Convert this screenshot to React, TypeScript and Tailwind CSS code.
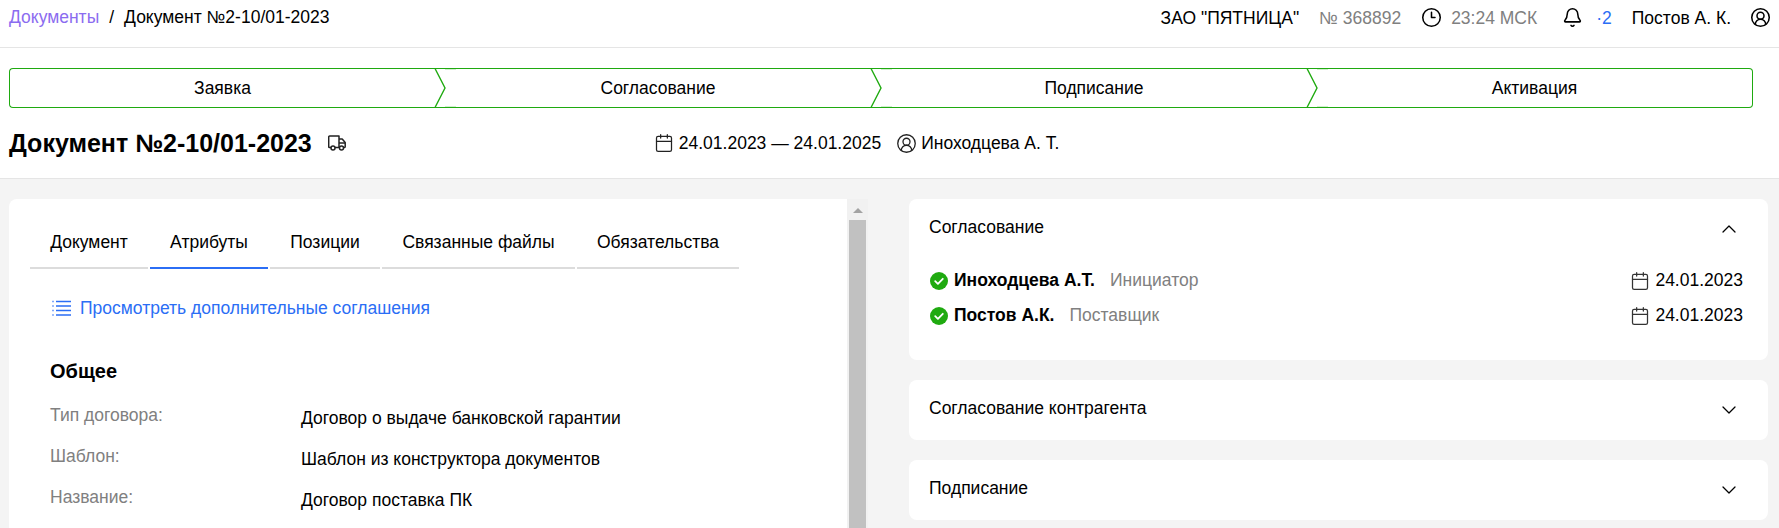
import React from "react";
import { Bell, Calendar, ChevronDown, ChevronUp, CircleUserRound, Clock3 } from "lucide-react";

const steps = ["Заявка", "Согласование", "Подписание", "Активация"];
const tabs: [string, string][] = [
  ["Документ", "w-[118px]"],
  ["Атрибуты", "w-[118px]"],
  ["Позиции", "w-[110px]"],
  ["Связанные файлы", "w-[193px]"],
  ["Обязательства", "w-[162px]"],
];
const rows = [
  ["Тип договора:", "Договор о выдаче банковской гарантии"],
  ["Шаблон:", "Шаблон из конструктора документов"],
  ["Название:", "Договор поставка ПК"],
];

function Check() {
  return (
    <svg width="18" height="18" viewBox="0 0 18 18" className="ml-[1px] shrink-0">
      <circle cx="9" cy="9" r="9" fill="#1faa10" />
      <path d="M5.2 9.2l2.7 2.6 4.9-5" fill="none" stroke="#fff" strokeWidth="1.8" strokeLinecap="round" strokeLinejoin="round" />
    </svg>
  );
}

function TruckIcon() {
  return (
    <svg width="18" height="16" viewBox="0 0 18 16" className="ml-[16px] shrink-0" fill="none" stroke="#222" strokeWidth="1.5" strokeLinejoin="round">
      <path d="M3 12.5H1.5a.8.8 0 0 1-.8-.8V2a1 1 0 0 1 1-1H11v11.5H7" />
      <path d="M11 4h3.2l3 3.6v4.2a.7.7 0 0 1-.7.7H15" />
      <path d="M11 8h6" />
      <path d="M11 12.5h.5" />
      <circle cx="5" cy="13" r="2" />
      <circle cx="13.5" cy="13" r="2" />
    </svg>
  );
}

function ListIcon() {
  return (
    <svg width="20" height="16" viewBox="0 0 20 16" className="shrink-0" fill="none" stroke="#2b6ef5">
      <path d="M5 1.5h15M5 6h15M5 10.500h15M5 15h15" strokeWidth="1.5" />
      <path d="M1 1.500h2M1 6h2M1 10.500h2M1 15h2" strokeWidth="1.5" opacity="0.6" />
    </svg>
  );
}

function Person({ name, role }: { name: string; role: string }) {
  return (
    <div className="flex h-[35px] items-center">
      <Check />
      <span className="ml-[6px] font-bold">{name}</span>
      <span className="ml-[15px] text-[#808080]">{role}</span>
      <span className="ml-auto flex items-center gap-[5px]">
        <Calendar size={20} strokeWidth={1.5} className="text-[#333]" />
        24.01.2023
      </span>
    </div>
  );
}

function Panel({ title, open }: { title: string; open?: boolean }) {
  return (
    <div className="rounded-lg bg-white px-[20px]">
      <div className="flex h-[60px] items-center justify-between pr-[7px]">
        <span className="pb-[3px]">{title}</span>
        {open ? <ChevronUp size={24} strokeWidth={1.25} /> : <ChevronDown size={24} strokeWidth={1.25} />}
      </div>
      {open && (
        <div className="pt-[4px] pb-[27px] pr-[5px]">
          <Person name="Иноходцева А.Т." role="Инициатор" />
          <Person name="Постов А.К." role="Поставщик" />
        </div>
      )}
    </div>
  );
}

export default function App() {
  return (
    <div className="flex h-[528px] flex-col overflow-hidden bg-white text-[17.5px] text-black font-['Liberation_Sans',Arial,sans-serif]">
      <header className="flex h-[48px] shrink-0 items-start justify-between border-b border-[#e5e5e5] pl-[9px] pr-[8px] pt-[7px]">
        <div className="flex items-center leading-[20px]">
          <span className="text-[#8b6cf0]">Документы</span>
          <span className="mx-[10px]">/</span>
          <span>Документ №2-10/01-2023</span>
        </div>
        <div className="flex items-center leading-[20px]">
          <span>ЗАО "ПЯТНИЦА"</span>
          <span className="ml-[20px] text-[#808080]">№ 368892</span>
          <Clock3 size={21} strokeWidth={1.75} className="ml-[20px]" />
          <span className="ml-[9px] text-[#808080]">23:24 МСК</span>
          <Bell size={21} strokeWidth={1.75} className="ml-[25px]" />
          <span className="ml-[13px] text-[#2b6ef5]">·2</span>
          <span className="ml-[20px]">Постов А. К.</span>
          <CircleUserRound size={21} strokeWidth={1.75} className="ml-[19px]" />
        </div>
      </header>

      <div className="h-[131px] shrink-0 border-b border-[#e5e5e5] px-[9px]">
        <div className="mt-[20px] flex h-[40px] w-[1744px]">
          {steps.map((s, i) => (
            <div
              key={s}
              className={
                "relative flex h-full w-[436px] items-center justify-center border-y border-[#1faa10] " +
                (i === 0 ? "rounded-l-[4px] border-l " : "") +
                (i === 3 ? "rounded-r-[4px] border-r " : "pr-[10px] ")
              }
            >
              {s}
              {i < 3 && (
                <svg width="22" height="40" viewBox="0 0 22 40" className="absolute -right-[11px] -top-[1px] z-10">
                  <path d="M11 1.500H22M11 38.500H22" fill="none" stroke="#1faa10" strokeOpacity="0.2" />
                  <path d="M1 0.500L11 20L1 39.500" fill="none" stroke="#1faa10" strokeWidth="1.4" />
                </svg>
              )}
            </div>
          ))}
        </div>
        <div className="mt-[19px] flex items-center">
          <h1 className="text-[25px] font-bold leading-[32px]">Документ №2-10/01-2023</h1>
          <TruckIcon />
          <div className="ml-[308px] flex items-center">
            <Calendar size={20} strokeWidth={1.5} className="text-[#222]" />
            <span className="ml-[5px]">24.01.2023 — 24.01.2025</span>
            <CircleUserRound size={21} strokeWidth={1.5} className="ml-[15px] text-[#222]" />
            <span className="ml-[4px]">Иноходцева А. Т.</span>
          </div>
        </div>
      </div>

      <main className="flex min-h-0 flex-1 bg-[#f4f4f4] pl-[9px] pr-[11px] pt-[20px]">
        <section className="relative mr-[41px] w-[859px] shrink-0 overflow-hidden rounded-tl-lg bg-white pl-[21px]">
          <div className="flex gap-[2px] pt-[21px]">
            {tabs.map(([t, w], i) => (
              <div
                key={t}
                className={
                  "flex h-[49px] items-start justify-center pt-[9px] border-b-[2px] " +
                  w +
                  (i === 1 ? " border-[#2b6ef5]" : " border-[#dcdcdc]")
                }
              >
                {t}
              </div>
            ))}
          </div>
          <div className="mt-[26px] flex items-center pl-[21px] text-[#2b6ef5]">
            <ListIcon />
            <span className="ml-[9px]">Просмотреть дополнительные соглашения</span>
          </div>
          <h2 className="ml-[20px] mt-[38px] text-[20px] font-bold leading-[24px]">Общее</h2>
          <div className="mt-[19px] pl-[20px]">
            {rows.map(([k, v]) => (
              <div key={k} className="flex h-[41px]">
                <span className="w-[251px] shrink-0 text-[#808080]">{k}</span>
                <span className="pt-[3px]">{v}</span>
              </div>
            ))}
          </div>
          <div className="absolute bottom-0 right-0 top-0 flex w-[21px] flex-col items-center bg-[#f1f1f1]">
            <svg width="12" height="8" viewBox="0 0 12 8" className="mt-[8px]">
              <path d="M6 1l5 5H1z" fill="#a3a3a3" />
            </svg>
            <div className="mt-[5px] w-[17px] flex-1 bg-[#c1c1c1]" />
          </div>
        </section>
        <aside className="flex min-w-0 flex-1 flex-col gap-[20px]">
          <Panel title="Согласование" open />
          <Panel title="Согласование контрагента" />
          <Panel title="Подписание" />
        </aside>
      </main>
    </div>
  );
}
